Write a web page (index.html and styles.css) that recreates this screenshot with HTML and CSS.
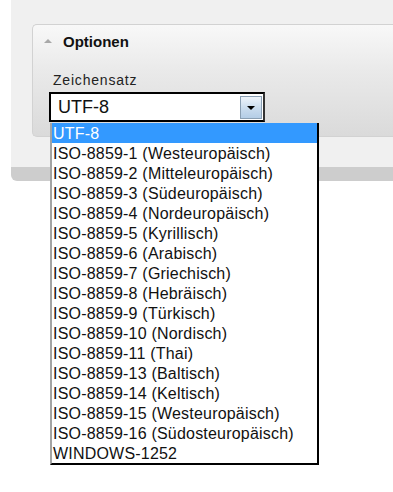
FILE: index.html
```html
<!DOCTYPE html>
<html>
<head>
<meta charset="UTF-8">
  <link rel="stylesheet" href="styles.css">
  <title>
    Optionen
  </title>
</head>
<body>
<div class="page">
  <div class="stage">
    <div class="panel">
      <div class="panel-head">
        <span class="toggle"></span>
        <span class="panel-title">Optionen</span>
      </div>
      <div class="panel-body">
        <div class="label">Zeichensatz</div>
        <div class="combo">
          <div class="select">
            <span class="value">UTF-8</span>
            <span class="button"><span class="arrow"></span></span>
          </div>
          <ul class="options">
            <li class="selected">UTF-8</li>
            <li>ISO-8859-1 (Westeuropäisch)</li>
            <li>ISO-8859-2 (Mitteleuropäisch)</li>
            <li>ISO-8859-3 (Südeuropäisch)</li>
            <li>ISO-8859-4 (Nordeuropäisch)</li>
            <li>ISO-8859-5 (Kyrillisch)</li>
            <li>ISO-8859-6 (Arabisch)</li>
            <li>ISO-8859-7 (Griechisch)</li>
            <li>ISO-8859-8 (Hebräisch)</li>
            <li>ISO-8859-9 (Türkisch)</li>
            <li>ISO-8859-10 (Nordisch)</li>
            <li>ISO-8859-11 (Thai)</li>
            <li>ISO-8859-13 (Baltisch)</li>
            <li>ISO-8859-14 (Keltisch)</li>
            <li>ISO-8859-15 (Westeuropäisch)</li>
            <li>ISO-8859-16 (Südosteuropäisch)</li>
            <li>WINDOWS-1252</li>
          </ul>
        </div>
      </div>
    </div>
  </div>
</div>
</body>
</html>
```

FILE: styles.css
```css
html
{
  height: 100%;
}
body
{
  margin: 0;
  min-height: 100%;
  background-color: #fff;
  font-family: "Liberation Sans", Arial, sans-serif;
  color: #111;
}
.page
{
  padding-left: 11px;
  min-height: 492px;
}
.stage
{
  background-color: #f0f0f0;
  padding: 24px 0 30px 21px;
  border-bottom: 14px solid #cdcdcd;
  border-bottom-left-radius: 6px;
}
.panel
{
  height: 111px;
  border: 1px solid #d2d2d2;
  border-right: none;
  border-radius: 5px 0 0 5px;
  background: linear-gradient(#f8f8f8, #eaeaea 40%, #dadada);
}
.panel-head
{
  display: flex;
  align-items: center;
  padding: 8px 0 0 11px;
  height: 18px;
}
.toggle
{
  width: 0;
  height: 0;
  border-left: 4px solid transparent;
  border-right: 4px solid transparent;
  border-bottom: 4px solid #a8a8a8;
  margin-right: 11px;
  margin-top: -2px;
}
.panel-title
{
  font-size: 15px;
  font-weight: bold;
  line-height: 18px;
  color: #111;
}
.panel-body
{
  padding: 21px 0 0 16px;
}
.label
{
  font-size: 14px;
  line-height: 16px;
  letter-spacing: 0.8px;
  padding-left: 4px;
  margin-bottom: 4px;
  color: #222;
}
.combo
{
  position: relative;
  z-index: 5;
  width: 216px;
}
.select
{
  display: flex;
  align-items: center;
  justify-content: space-between;
  height: 26px;
  border: 2px solid #000;
  border-right-color: #333;
  background-color: #fff;
  padding-left: 7px;
}
.value
{
  font-size: 18px;
  line-height: 26px;
  color: #111;
}
.button
{
  display: flex;
  align-items: center;
  justify-content: center;
  width: 20px;
  height: 21px;
  margin-right: 1px;
  border: 1px solid #8a9fb3;
  background: linear-gradient(#eef4fa, #c9dcee 55%, #b4cde6);
}
.arrow
{
  width: 0;
  height: 0;
  border-left: 4px solid transparent;
  border-right: 4px solid transparent;
  border-top: 4px solid #000;
  margin-top: 2px;
}
.options
{
  position: absolute;
  top: 31px;
  left: 1px;
  width: 265px;
  margin: 0;
  padding: 0;
  list-style-type: none;
  background-color: #fff;
  border-left: 2px solid #a4a4a4;
  border-right: 2px solid #000;
  border-bottom: 2px solid #000;
}
.options li
{
  height: 18px;
  padding: 2px 0 0 1px;
  font-size: 16px;
  line-height: 18px;
  letter-spacing: 0.2px;
  white-space: nowrap;
}
.options li.selected
{
  background-color: #3399ff;
  color: #fff;
}
```
